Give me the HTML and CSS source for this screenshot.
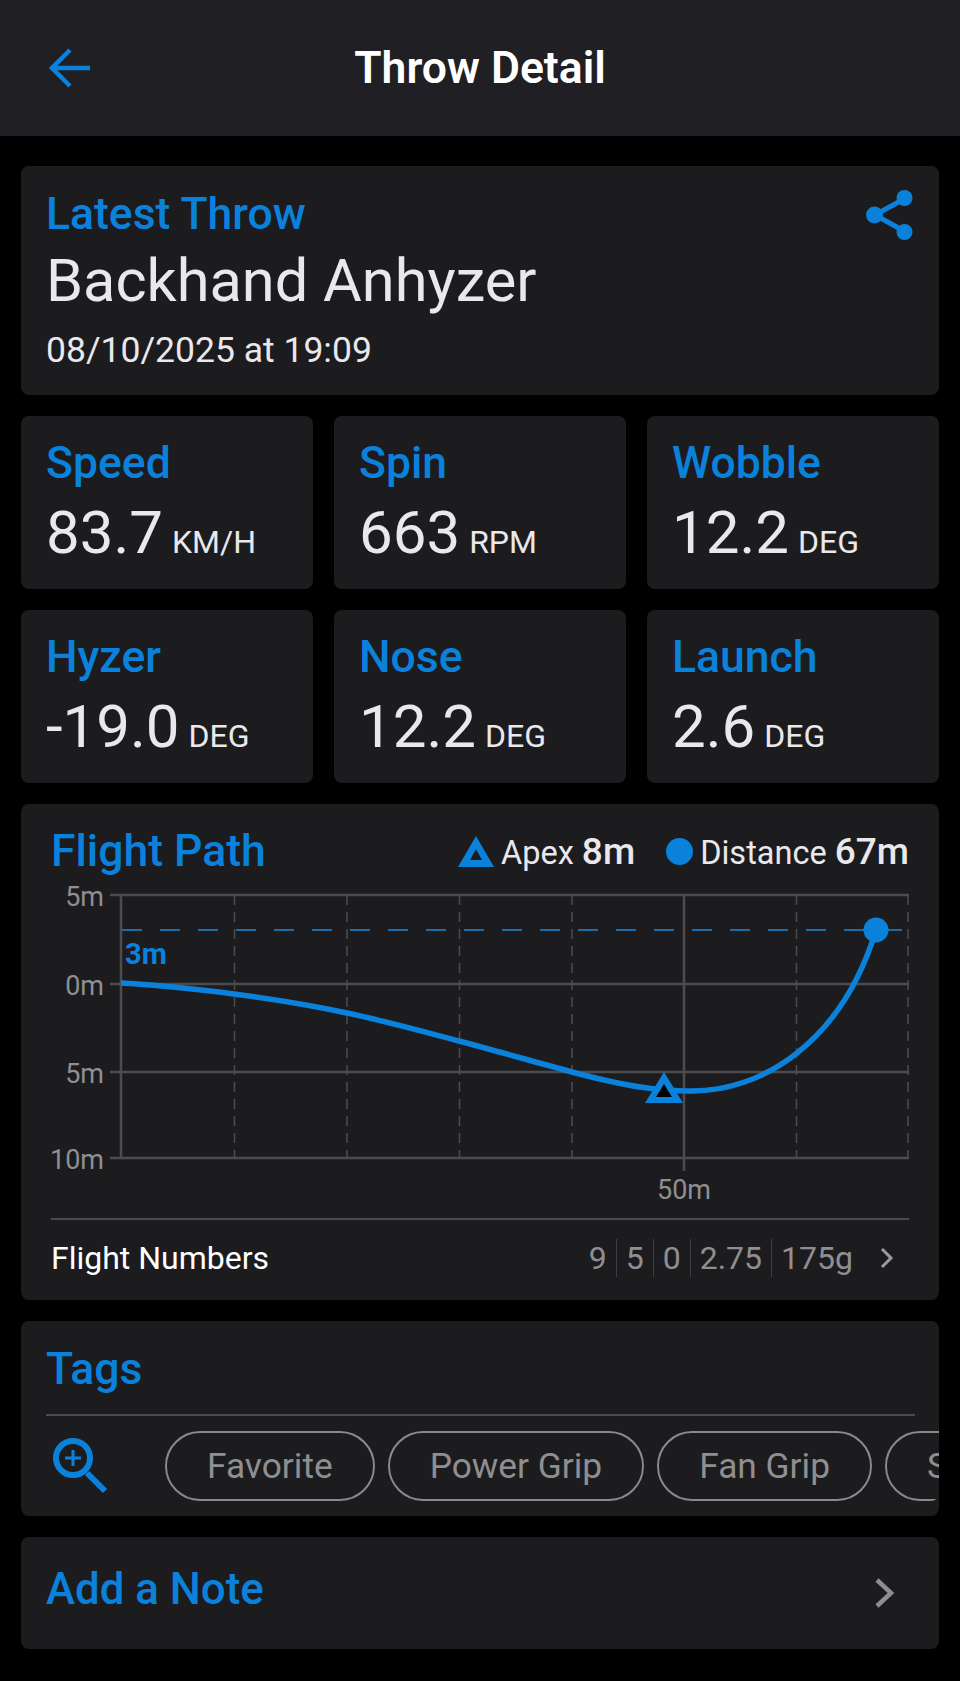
FILE: index.html
```html
<!DOCTYPE html>
<html lang="en">

<head>
    <meta charset="UTF-8">
    <meta name="viewport" content="width=device-width, initial-scale=1.0">
    <title>Throw Detail</title>
    <link rel="stylesheet" href="styles.css">
</head>

<body>
    <header class="topbar">
        <svg class="back-icon" viewBox="0 0 42 40" fill="none" stroke="#0a82dc" stroke-width="4.500">
            <path d="M41 20H4M21 2L3 20l18 18" />
        </svg>
        <h1>Throw Detail</h1>
    </header>

    <main class="content">
        <section class="card latest">
            <div>
                <h2 class="latest-label">Latest Throw</h2>
                <p class="latest-name">Backhand Anhyzer</p>
                <p class="latest-date">08/10/2025 at 19:09</p>
            </div>
            <svg class="share-icon" viewBox="0 0 47 50" fill="#0a82dc" stroke="#0a82dc">
                <path d="M38 9L9 25l29 16" fill="none" stroke-width="5" />
                <circle cx="38.500" cy="8" r="8" stroke="none" />
                <circle cx="8.500" cy="25" r="8.500" stroke="none" />
                <circle cx="38.500" cy="42" r="8" stroke="none" />
            </svg>
        </section>

        <section class="stats">
            <div class="card stat">
                <h3>Speed</h3>
                <p><span class="num">83.7</span> <span class="unit">KM/H</span></p>
            </div>
            <div class="card stat">
                <h3>Spin</h3>
                <p><span class="num">663</span> <span class="unit">RPM</span></p>
            </div>
            <div class="card stat">
                <h3>Wobble</h3>
                <p><span class="num">12.2</span> <span class="unit">DEG</span></p>
            </div>
            <div class="card stat">
                <h3>Hyzer</h3>
                <p><span class="num">-19.0</span> <span class="unit">DEG</span></p>
            </div>
            <div class="card stat">
                <h3>Nose</h3>
                <p><span class="num">12.2</span> <span class="unit">DEG</span></p>
            </div>
            <div class="card stat">
                <h3>Launch</h3>
                <p><span class="num">2.6</span> <span class="unit">DEG</span></p>
            </div>
        </section>

        <section class="card flight">
            <div class="flight-head">
                <h2>Flight Path</h2>
                <div class="legend">
                    <span class="legend-item">
                        <svg class="legend-tri" viewBox="0 0 36 31" fill="#0a82dc" fill-rule="evenodd">
                            <path d="M18 0L36 31H0zM18 13l-6 11h12z" />
                        </svg>
                        <span>Apex <b>8m</b></span>
                    </span>
                    <span class="legend-item">
                        <span class="legend-dot"></span>
                        <span>Distance <b>67m</b></span>
                    </span>
                </div>
            </div>

            <svg class="chart" viewBox="21 880 918 330" width="918" height="330">
                <g class="grid-dash">
                    <path d="M234.500 895V1158M347 895V1158M459.500 895V1158M572 895V1158M796.500 895V1158M908 895V1158" />
                </g>
                <g class="grid">
                    <path d="M110 895H909M110 984H909M110 1072H909M110 1158H909M121 895V1158M684 895V1171" />
                </g>
                <path class="apex-line" d="M122 930H908" />
                <path class="curve" d="M121 983C140 983.500 196 989 234 994C272 999 310 1005 347 1013C385 1021 421 1031 459 1041C497 1051 542 1064 572 1072C602 1080 620 1084 640 1087C660 1090 674 1091 690 1091C762 1092 842 1042 876 930" />
                <circle class="curve-end" cx="876" cy="930" r="12.500" />
                <path class="apex-mark" d="M664 1072L683 1103H645z" />
                <path class="apex-hole" d="M664 1084L672 1097H656z" />
                <text class="apex-label" x="125" y="964">3m</text>
                <text class="axis" x="104" y="906" text-anchor="end">5m</text>
                <text class="axis" x="104" y="995" text-anchor="end">0m</text>
                <text class="axis" x="104" y="1083" text-anchor="end">5m</text>
                <text class="axis" x="104" y="1169" text-anchor="end">10m</text>
                <text class="axis" x="684" y="1199" text-anchor="middle">50m</text>
            </svg>

            <div class="numbers">
                <span class="numbers-label">Flight Numbers</span>
                <div class="numbers-values">
                    <span>9</span>
                    <span>5</span>
                    <span>0</span>
                    <span>2.75</span>
                    <span>175g</span>
                </div>
                <svg class="chevron-small" viewBox="0 0 14 22" fill="none" stroke="#9a9a9c" stroke-width="3">
                    <path d="M2 2l9 9-9 9" />
                </svg>
            </div>
        </section>

        <section class="card tags">
            <h2>Tags</h2>
            <div class="tag-row">
                <svg class="search-icon" viewBox="0 0 56 56" fill="none" stroke="#0a82dc">
                    <circle cx="21" cy="20" r="17" stroke-width="6" />
                    <path d="M21 12v16M13 20h16" stroke-width="3" />
                    <path d="M35 35l18 18" stroke-width="6" />
                </svg>
                <div class="chips">
                    <span class="chip">Favorite</span>
                    <span class="chip">Power Grip</span>
                    <span class="chip">Fan Grip</span>
                    <span class="chip">Stall</span>
                </div>
            </div>
        </section>

        <section class="card note">
            <h2>Add a Note</h2>
            <svg class="chevron" viewBox="0 0 20 30" fill="none" stroke="#8e8e90" stroke-width="4.500">
                <path d="M2 2l14 13L2 28" />
            </svg>
        </section>
    </main>
</body>

</html>
```

FILE: styles.css
```css
* {
    box-sizing: border-box;
}

body {
    margin: 0;
    background-color: #000;
    color: #e9e8ed;
    font-family: Roboto, "Liberation Sans", sans-serif;
}

h1,
h2,
h3,
p {
    margin: 0;
    font-weight: 500;
}

h2,
h3 {
    color: #0a82dc;
    font-size: 44.500px;
}

.topbar {
    height: 136px;
    background-color: #1f1f24;
    display: flex;
    align-items: center;
    justify-content: center;
    position: relative;
}

.topbar h1 {
    font-size: 44.500px;
    font-weight: 600;
    color: #fff;
}

.back-icon {
    position: absolute;
    left: 49px;
    top: 48px;
    width: 42px;
    height: 40px;
}

.content {
    padding: 30px 21px 0;
    display: flex;
    flex-direction: column;
    gap: 21px;
}

.card {
    background-color: #1c1c1f;
    border-radius: 8px;
}

.latest {
    height: 229px;
    padding: 23px 26px 0 25px;
    display: flex;
    justify-content: space-between;
    align-items: flex-start;
}

.latest-label {
    line-height: 50px;
}

.latest-name {
    font-size: 59.500px;
    font-weight: 400;
    line-height: 70px;
    margin-top: 7px;
}

.latest-date {
    font-size: 35.500px;
    font-weight: 400;
    line-height: 40px;
    margin-top: 14px;
}

.share-icon {
    width: 47px;
    height: 50px;
    margin-top: 1px;
}

.stats {
    display: grid;
    grid-template-columns: repeat(3, 1fr);
    gap: 21px;
}

.stat {
    height: 173px;
    padding: 22px 25px 0;
}

.stat h3 {
    line-height: 50px;
}

.stat p {
    font-weight: 400;
    line-height: 76px;
    margin-top: 7px;
    white-space: nowrap;
}

.num {
    font-size: 60px;
}

.unit {
    font-size: 32px;
    margin-left: 5px;
}

.flight {
    height: 496px;
}

.flight-head {
    height: 76px;
    padding: 18px 30px 0;
    display: flex;
    justify-content: space-between;
    align-items: center;
}

.legend {
    display: flex;
    gap: 31px;
    font-size: 32.500px;
}

.legend-item {
    display: flex;
    align-items: center;
    gap: 7px;
}

.legend b {
    font-size: 37px;
    font-weight: 500;
}

.legend-tri {
    width: 36px;
    height: 31px;
}

.legend-dot {
    width: 27px;
    height: 27px;
    border-radius: 50%;
    background-color: #0a82dc;
}

.chart {
    display: block;
}

.grid {
    fill: none;
    stroke: #4c4c4e;
    stroke-width: 2.500;
}

.grid-dash {
    fill: none;
    stroke: #4c4c4e;
    stroke-width: 1.500;
    stroke-dasharray: 10 7;
}

.apex-line {
    fill: none;
    stroke: #1c6dab;
    stroke-width: 2;
    stroke-dasharray: 20 18;
}

.curve {
    fill: none;
    stroke: #0a82dc;
    stroke-width: 5.500;
}

.curve-end,
.apex-mark {
    fill: #0a82dc;
}

.apex-hole {
    fill: #000;
}

.apex-label {
    fill: #0a82dc;
    font-size: 29px;
    font-weight: 700;
}

.axis {
    fill: #8f8f91;
    font-size: 27px;
}

.numbers {
    margin: 8px 30px 0;
    padding-top: 8px;
    height: 70px;
    border-top: 2px solid #4c4c4e;
    display: flex;
    align-items: center;
    font-size: 32px;
}

.numbers-label {
    color: #fff;
    flex: 1;
}

.numbers-values {
    display: flex;
    color: #8f8f91;
}

.numbers-values span {
    padding: 0 9px;
    border-left: 1px solid #3e3e40;
    line-height: 38px;
}

.numbers-values span:first-child {
    border-left: none;
}

.chevron-small {
    width: 14px;
    height: 22px;
    margin-left: 18px;
    margin-right: 15px;
}

.tags {
    height: 195px;
    display: flex;
    flex-direction: column;
}

.tags h2 {
    line-height: 50px;
    margin: 23px 24px 0 25px;
    padding-bottom: 20px;
    border-bottom: 2px solid #4c4c4e;
}

.tag-row {
    display: flex;
    align-items: center;
    margin-top: 15px;
    padding-left: 31px;
    overflow: hidden;
    border-radius: 0 0 8px 0;
}

.search-icon {
    width: 56px;
    height: 56px;
    flex-shrink: 0;
}

.chips {
    display: flex;
    gap: 13px;
    margin-left: 57px;
}

.chip {
    height: 70px;
    padding: 0 40px;
    border: 2px solid #8a8a8c;
    border-radius: 35px;
    display: flex;
    align-items: center;
    font-size: 35.300px;
    color: #8f8f91;
    white-space: nowrap;
    flex-shrink: 0;
}

.note {
    height: 112px;
    padding: 0 44px 8px 25px;
    display: flex;
    justify-content: space-between;
    align-items: center;
}

.note h2 {
    font-size: 43.800px;
}

.chevron {
    width: 20px;
    height: 30px;
    margin-top: 8px;
}
```
